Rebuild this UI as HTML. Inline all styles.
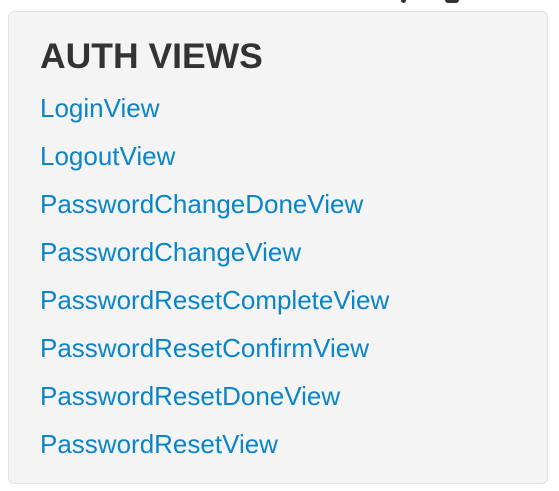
<!DOCTYPE html>
<html><head><style>
body{margin:0;width:559px;height:491px;background:#fff;overflow:hidden;font-family:"Liberation Sans",Arial,sans-serif;position:relative}
.box{position:absolute;left:8px;top:11px;width:538px;height:471px;background:#f4f4f4;border:1px solid #e3e3e3;border-radius:6px}
h2{position:absolute;left:40px;top:34px;margin:0;font-size:35.5px;line-height:44px;font-weight:bold;color:#333}
a{position:absolute;left:40px;font-size:26px;line-height:30px;color:#0b84c8;text-decoration:none;white-space:nowrap}
.tb{position:absolute;top:-4px;height:7px;background:#333;border-radius:3px}
</style></head><body>
<div class="tb" style="left:401px;width:5px"></div>
<div class="tb" style="left:445px;width:14px"></div>
<div class="box"></div>
<h2>AUTH VIEWS</h2>
<a style="top:93px">LoginView</a>
<a style="top:141px">LogoutView</a>
<a style="top:189px">PasswordChangeDoneView</a>
<a style="top:237px">PasswordChangeView</a>
<a style="top:285px">PasswordResetCompleteView</a>
<a style="top:333px">PasswordResetConfirmView</a>
<a style="top:381px">PasswordResetDoneView</a>
<a style="top:429px">PasswordResetView</a>
</body></html>
